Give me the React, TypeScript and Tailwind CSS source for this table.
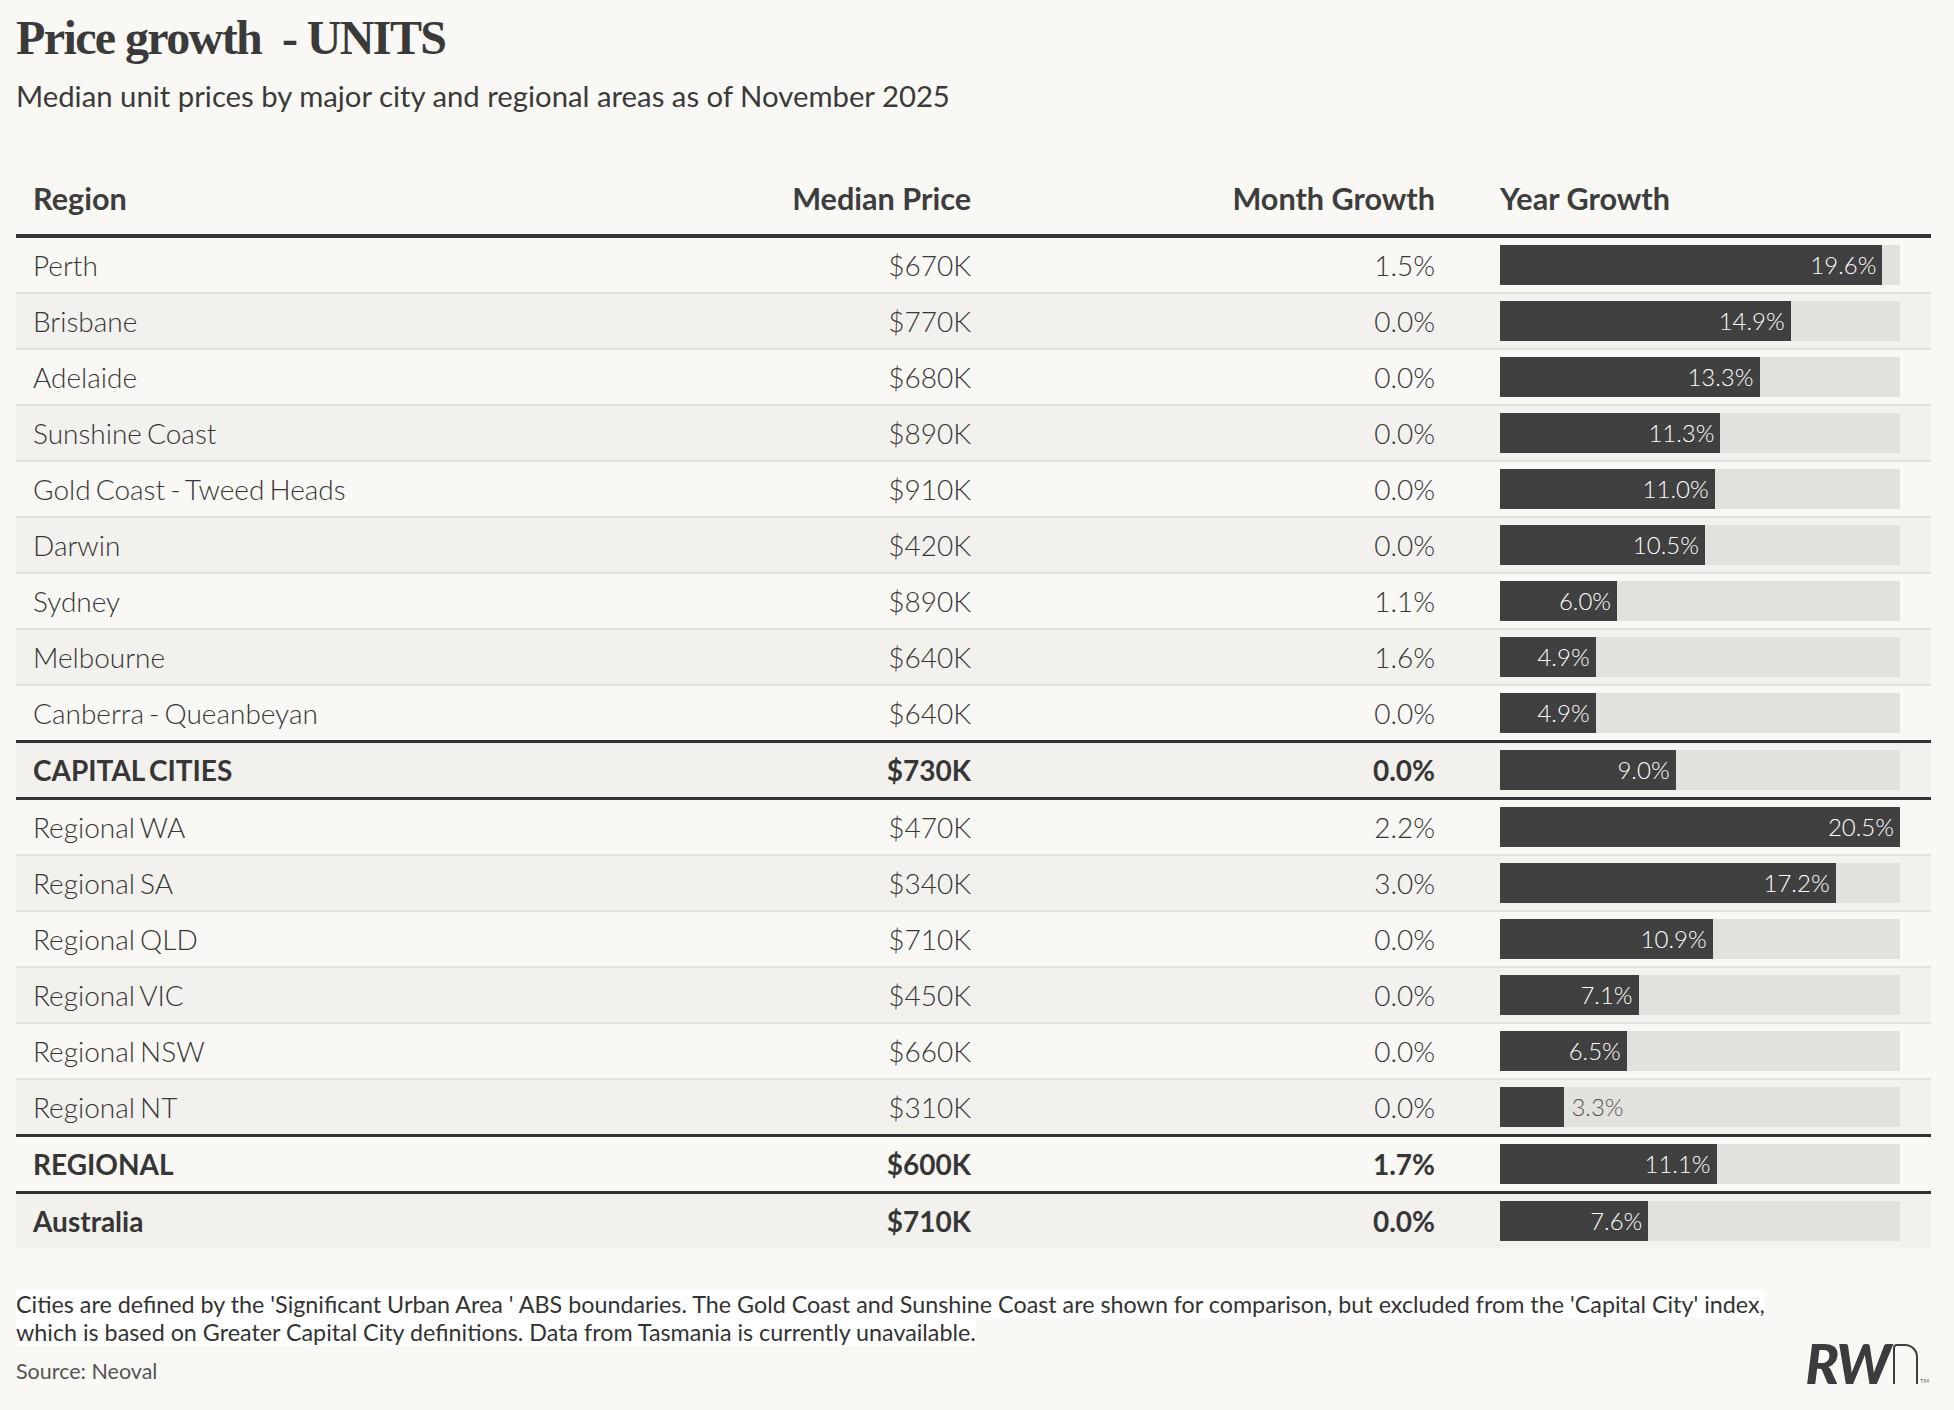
import React from 'react'

type Row = {
  name: string
  price: string
  month: string
  year: number
  bold?: boolean
  darkTop?: boolean
  lightBottom?: boolean
}

const rows: Row[] = [
  { name: 'Perth', price: '$670K', month: '1.5%', year: 19.6, lightBottom: true },
  { name: 'Brisbane', price: '$770K', month: '0.0%', year: 14.9, lightBottom: true },
  { name: 'Adelaide', price: '$680K', month: '0.0%', year: 13.3, lightBottom: true },
  { name: 'Sunshine Coast', price: '$890K', month: '0.0%', year: 11.3, lightBottom: true },
  { name: 'Gold Coast - Tweed Heads', price: '$910K', month: '0.0%', year: 11.0, lightBottom: true },
  { name: 'Darwin', price: '$420K', month: '0.0%', year: 10.5, lightBottom: true },
  { name: 'Sydney', price: '$890K', month: '1.1%', year: 6.0, lightBottom: true },
  { name: 'Melbourne', price: '$640K', month: '1.6%', year: 4.9, lightBottom: true },
  { name: 'Canberra - Queanbeyan', price: '$640K', month: '0.0%', year: 4.9 },
  { name: 'CAPITAL CITIES', price: '$730K', month: '0.0%', year: 9.0, bold: true, darkTop: true },
  { name: 'Regional WA', price: '$470K', month: '2.2%', year: 20.5, darkTop: true, lightBottom: true },
  { name: 'Regional SA', price: '$340K', month: '3.0%', year: 17.2, lightBottom: true },
  { name: 'Regional QLD', price: '$710K', month: '0.0%', year: 10.9, lightBottom: true },
  { name: 'Regional VIC', price: '$450K', month: '0.0%', year: 7.1, lightBottom: true },
  { name: 'Regional NSW', price: '$660K', month: '0.0%', year: 6.5, lightBottom: true },
  { name: 'Regional NT', price: '$310K', month: '0.0%', year: 3.3 },
  { name: 'REGIONAL', price: '$600K', month: '1.7%', year: 11.1, bold: true, darkTop: true },
  { name: 'Australia', price: '$710K', month: '0.0%', year: 7.6, bold: true, darkTop: true },
]

// bars are scaled so the biggest yearly growth fills the whole track
const MAX = 20.5
const TRACK = 400

function rowClass(row: Row) {
  if (row.darkTop && row.lightBottom) return 'h-[59px] border-t-[3px] border-b-2 border-t-[#333333] border-b-[#e4e2dd]'
  if (row.darkTop) return 'h-[57px] border-t-[3px] border-t-[#333333]'
  if (row.lightBottom) return 'h-[56px] border-b-2 border-b-[#e4e2dd]'
  return 'h-[54px]'
}

function YearBar({ value }: { value: number }) {
  const width = (value / MAX) * TRACK
  const label = `${value.toFixed(1)}%`
  const inside = value >= 4
  return (
    <div className="flex h-[40px] w-[400px] items-center bg-[#e2e1dd]">
      <div
        className="flex h-full items-center justify-end bg-[#404040] pr-[6px]"
        style={{ width }}
      >
        {inside && <span className="text-[24px] leading-none font-light text-white">{label}</span>}
      </div>
      {!inside && <span className="ml-[7px] text-[24px] leading-none font-light text-[#555555]">{label}</span>}
    </div>
  )
}

function Logo() {
  return (
    <div className="flex h-[40px] items-end">
      <span className="text-[56px] leading-[42px] font-black italic tracking-[-2px] text-[#3c3c3c]">RW</span>
      <div className="ml-[4px] h-[40px] w-[25px] rounded-tl-[4px] rounded-tr-[13px] border-2 border-b-0 border-[#3c3c3c]" />
      <span className="ml-[2px] text-[6px] leading-none text-[#666666]">TM</span>
    </div>
  )
}

export default function App() {
  return (
    <div className="min-h-[1410px] w-[1954px] bg-[#f9f8f4] font-['Lato','Noto_Sans',sans-serif] text-[#404040]">
      <div className="ml-4 w-[1915px] pt-[11px]">
        <h1 className="font-['Liberation_Serif',serif] text-[48px] leading-[53px] font-bold tracking-[-1.6px] text-[#3a3a3a]">
          Price growth&nbsp; - UNITS
        </h1>
        <p className="mt-[14px] text-[29.3px] leading-[35px] text-[#3a3a3a]">
          Median unit prices by major city and regional areas as of November 2025
        </p>

        <div className="mt-[68px] grid grid-cols-[555px_400px_464px_496px] items-end border-b-4 border-[#333333] pb-[17px] text-[30.6px] leading-[36px] font-bold text-[#3d3d3d]">
          <div className="pl-[17px]">Region</div>
          <div className="text-right">Median Price</div>
          <div className="text-right">Month Growth</div>
          <div className="pl-[65px]">Year Growth</div>
        </div>

        {rows.map((row, i) => (
          <div
            key={row.name}
            className={`grid grid-cols-[555px_400px_464px_496px] items-center text-[28px] leading-[34px] text-[#363636] [word-spacing:-2.5px] ${rowClass(row)} ${i % 2 === 1 ? 'bg-[#f2f1ed]' : 'bg-[#f9f8f4]'} ${row.bold ? 'font-bold' : 'font-light'}`}
          >
            <div className="pl-[17px]">{row.name}</div>
            <div className="text-right">{row.price}</div>
            <div className="text-right">{row.month}</div>
            <div className="pl-[65px]">
              <YearBar value={row.year} />
            </div>
          </div>
        ))}

        <div className="mt-[42px] flex items-end justify-between">
          <div>
            <p className="text-[23.3px] leading-[28px] text-[#333333]">
              <span className="bg-white">
                Cities are defined by the 'Significant Urban Area ' ABS boundaries. The Gold Coast and Sunshine Coast are shown for comparison, but excluded from the 'Capital City' index,
                <br />
                which is based on Greater Capital City definitions. Data from Tasmania is currently unavailable.
              </span>
            </p>
            <p className="mt-[13px] text-[21.5px] leading-[25px] text-[#555555]">Source: Neoval</p>
          </div>
          <div className="mr-[2px]">
            <Logo />
          </div>
        </div>
      </div>
    </div>
  )
}
